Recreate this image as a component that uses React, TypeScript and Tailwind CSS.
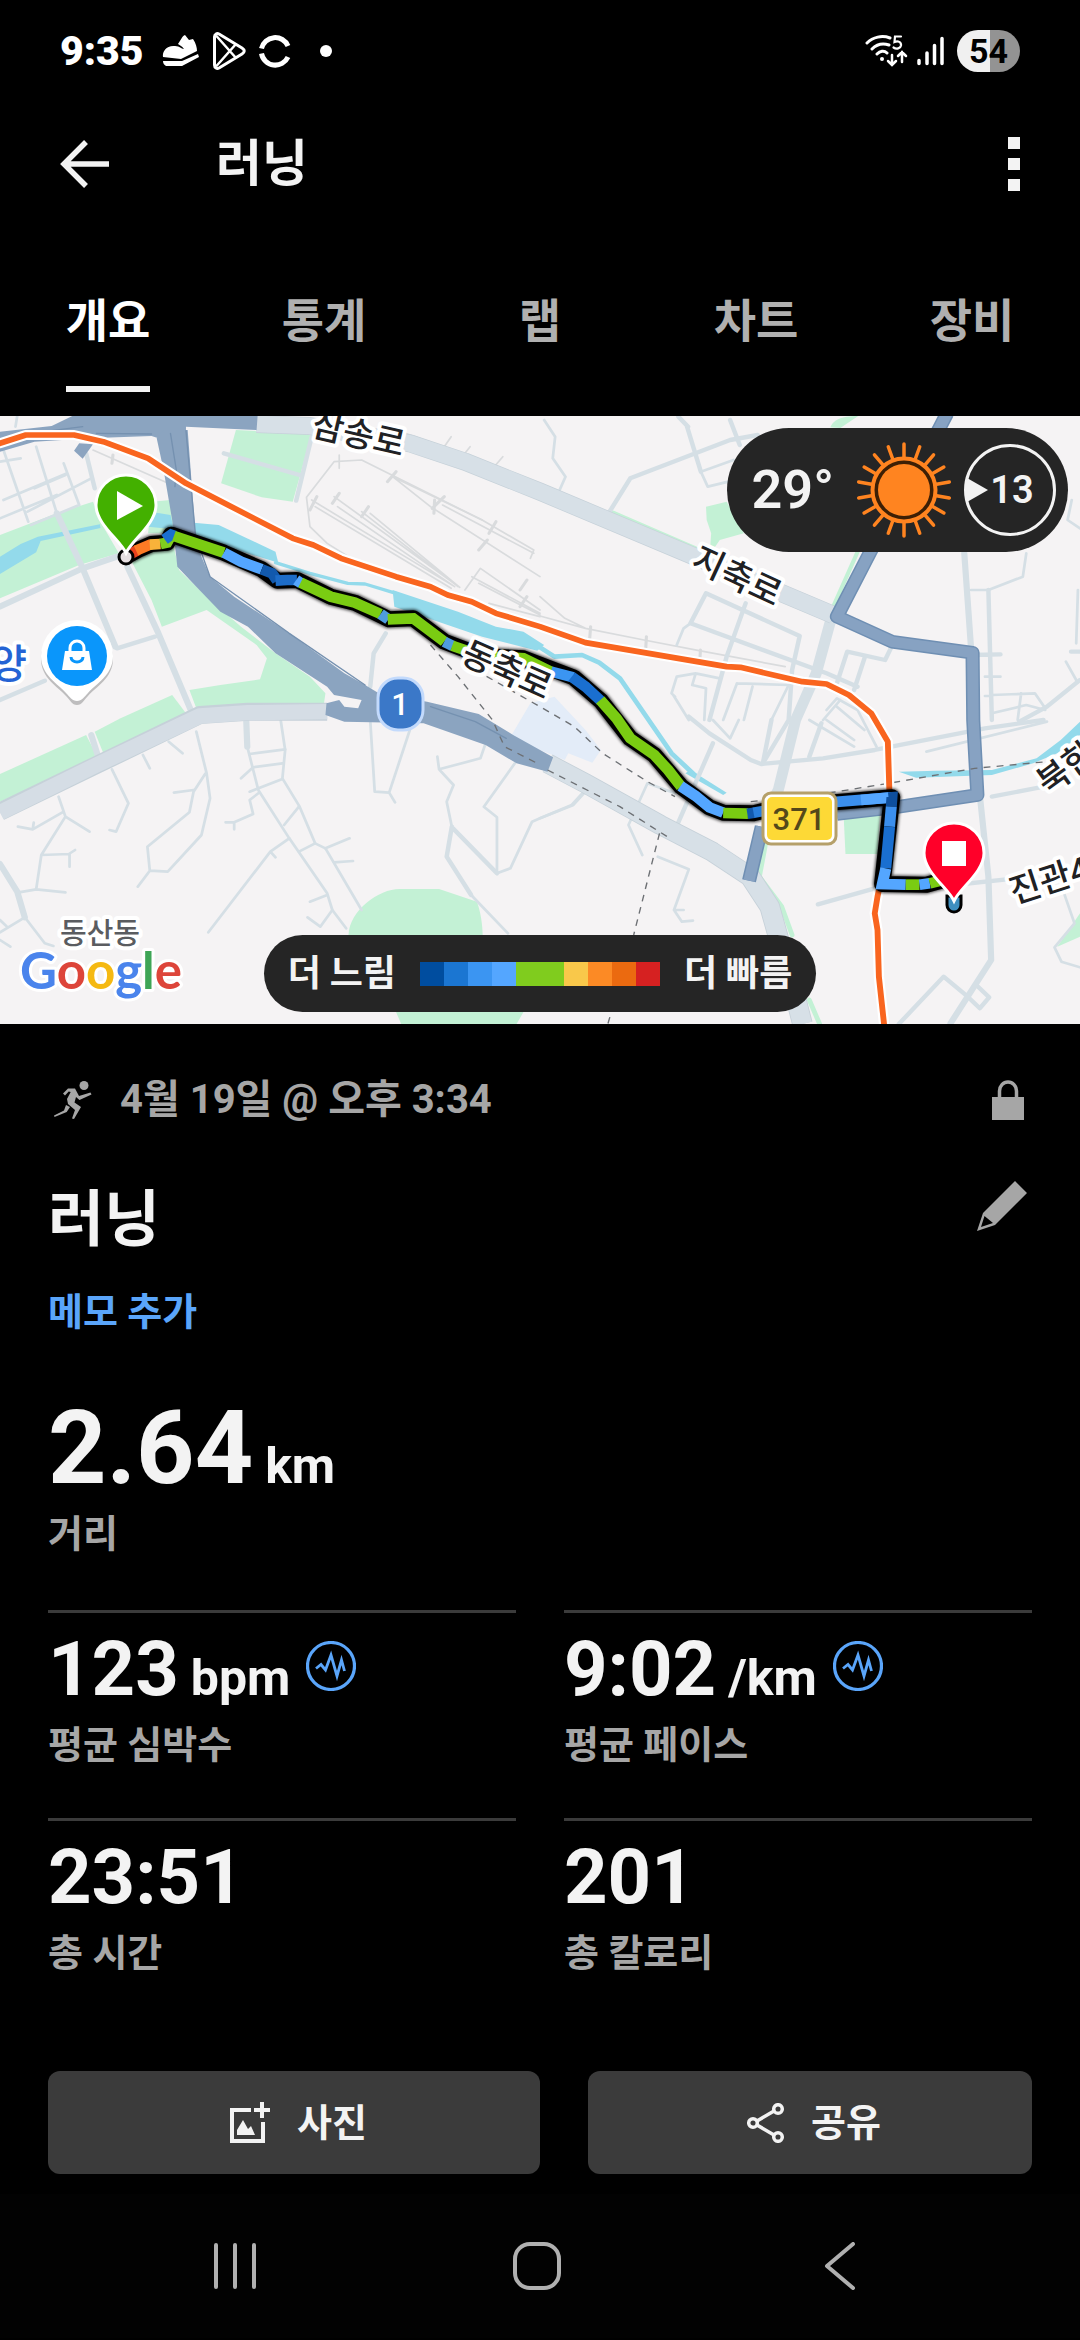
import React, { useState } from 'react';

const TABS = ['개요', '통계', '랩', '차트', '장비'];

const PACE_COLORS = [
  'bg-[#004d9f]',
  'bg-[#1b76d2]',
  'bg-[#3b95f2]',
  'bg-[#54a6ff]',
  'bg-[#80cc1e]',
  'bg-[#80cc1e]',
  'bg-[#f9c84a]',
  'bg-[#fc8a25]',
  'bg-[#eb6a10]',
  'bg-[#d62121]',
];

interface Stat {
  value: string;
  unit?: string;
  label: string;
  hasChart?: boolean;
}

const STATS: Stat[] = [
  { value: '123', unit: 'bpm', label: '평균 심박수', hasChart: true },
  { value: '9:02', unit: '/km', label: '평균 페이스', hasChart: true },
  { value: '23:51', label: '총 시간' },
  { value: '201', label: '총 칼로리' },
];

const RAY_ANGLES = Array.from({ length: 18 }, (_, i) => i * 20);

// [color, path] for each stretch of the run
const TRACK: [string, string][] = [
  ['#e8401c', 'M372 436 L400 420'],
  ['#fc7a25', 'M395 422 L440 402'],
  ['#f9b23a', 'M435 404 L466 402'],
  ['#80cc1e', 'M466 402 L485 398 L492 385'],
  ['#1a6fd0', 'M478 388 L497 374 L508 378'],
  ['#7acc12', 'M505 378 L650 428'],
  ['#54a6ff', 'M650 428 L700 455 L760 478'],
  ['#1259ad', 'M760 478 L790 490 L805 512'],
  ['#1d6cc8', 'M800 512 L835 510 L862 510'],
  ['#54a6ff', 'M860 510 L875 520'],
  ['#7acc12', 'M873 518 L960 560 L1030 578 L1105 612'],
  ['#4f9de0', 'M1105 612 L1128 628'],
  ['#7acc12', 'M1126 628 L1200 625 L1290 695'],
  ['#4f9de0', 'M1290 695 L1315 708'],
  ['#7acc12', 'M1313 707 L1400 738 L1520 745 L1600 785'],
  ['#3b95f2', 'M1600 785 L1665 802'],
  ['#1a6fd0', 'M1660 800 L1700 830 L1745 873'],
  ['#7acc12', 'M1743 870 L1790 925 L1830 985 L1900 1035 L1940 1080 L1978 1130'],
  ['#54a6ff', 'M1976 1128 L2020 1158 L2060 1192 L2100 1208'],
  ['#7acc12', 'M2100 1209 L2172 1211'],
  ['#1259ad', 'M2170 1211 L2190 1208'],
  ['#2a7fdc', 'M2188 1208 L2260 1195'],
  ['#3b8fee', 'M2260 1190 L2590 1162'],
  ['#54a6ff', 'M2500 1170 L2590 1162'],
  ['#0e4f9e', 'M2580 1163 L2590 1162 L2588 1190'],
  ['#3b8fee', 'M2588 1190 L2583 1250'],
  ['#1a6fd0', 'M2583 1250 L2572 1375'],
  ['#54a6ff', 'M2572 1375 L2562 1422 L2630 1424'],
  ['#7acc12', 'M2630 1424 L2670 1424'],
  ['#54a6ff', 'M2670 1424 L2700 1420'],
  ['#7acc12', 'M2700 1420 L2770 1402'],
];

const StatusBar: React.FC = () => (
  <div className="flex h-[102px] items-center justify-between px-[60px] text-white">
    <div className="flex items-center">
      <span className="text-[41px] leading-[48px] font-black">9:35</span>
      <svg className="ml-[18px] h-8 w-[38px]" viewBox="0 0 38 32" fill="currentColor">
        <path d="M1 22 C0 16 5 10 13 11 C18 11 19 14 22 14 C20 11 17 10 16 9 C19 5 20 1 23 0 L27 5 L31 4 C34 8 35 13 35 16 L19 24 Z" />
        <path d="M1 26 L20 26 L36 19 L37 22 L20 31 L4 31 C2 30 1 28 1 26 Z" />
      </svg>
      <svg className="ml-3 h-[38px] w-[34px]" viewBox="0 0 34 38" fill="none" stroke="currentColor" strokeWidth="3" strokeLinejoin="round">
        <path d="M2.500 5 C2.500 2 5 1 7 2 L30 16 C33 18 33 20 30 22 L7 36 C5 37 2.500 36 2.500 33 Z" />
        <path d="M4 3.500 L24 26 M4 34.500 L24 12" strokeWidth="2.500" />
      </svg>
      <svg className="ml-3 h-[34px] w-[34px]" viewBox="0 0 34 34" fill="none" stroke="currentColor" strokeWidth="5">
        <path d="M3.500 14.500 A14 14 0 0 1 30 12" />
        <path d="M3.500 19.500 A14 14 0 0 0 30 23" />
      </svg>
      <span className="ml-7 h-3 w-3 rounded-full bg-white" />
    </div>
    <div className="flex items-center">
      <svg className="h-8 w-[44px]" viewBox="0 0 44 32" fill="none" stroke="currentColor" strokeLinecap="round">
        <path d="M2 8 C8 2 17 0 25 3 M7 14 C12 9 18 8 24 10 M12 19 C15 16 19 15 22 18" strokeWidth="3" />
        <circle cx="17" cy="24" r="2" fill="currentColor" stroke="none" />
        <path d="M36 1.500 H30 L29.500 7 C33 5.500 36.500 7 36 10.500 C35.500 13.500 31.500 14.500 28.500 12.500" strokeWidth="2.200" />
        <path d="M27 20 V29 M23 26 L27 30 L31 26 M37 27 V17 M33 21 L37 17 L41 21" strokeWidth="2.500" />
      </svg>
      <svg className="ml-2 h-[30px] w-7" viewBox="0 0 28 30" stroke="currentColor" strokeWidth="3.500" strokeLinecap="round">
        <path d="M2 24.500 V27.500 M10 17 V27.500 M17.500 9.500 V27.500 M25 2.500 V27.500" />
      </svg>
      <div className="ml-3 flex h-[42px] w-[63px] items-center justify-center rounded-full bg-linear-to-r from-[#f0f0f0] from-53% to-[#939393] to-53% text-[34px] leading-[42px] font-bold text-black">
        54
      </div>
    </div>
  </div>
);

const RouteMap: React.FC = () => (
  <svg className="block h-auto w-full bg-[#f5f3f4]" viewBox="0 0 1080 608">
    <defs>
      <filter id="soft" x="-10%" y="-10%" width="120%" height="120%">
        <feGaussianBlur stdDeviation="4" />
      </filter>
    </defs>
    <g transform="translate(0 -6) scale(0.34439 0.33333)" fill="none" strokeLinejoin="round" strokeLinecap="round">
      {/* parks */}
      <g fill="#c3f1d5">
        <path d="M685 60 L905 72 L850 275 L760 262 L642 220 Z" />
        <path d="M0 375 L165 310 L270 275 L300 350 L345 430 L230 465 L0 565 Z" />
        <path d="M440 275 L495 270 L510 370 L430 370 Z" />
        <path d="M380 450 L500 390 L520 480 L600 560 L700 650 L800 730 L900 800 L945 850 L940 885 L760 885 L570 895 L550 840 L640 825 L755 808 L775 745 L745 705 L600 600 L470 650 L440 570 Z" />
        <path d="M0 1092 L250 975 L285 1045 L0 1175 Z" />
        <path d="M275 965 L350 925 L500 855 L540 910 L500 935 L300 1030 Z" />
        <path d="M1012 1575 C1015 1500 1100 1437 1160 1437 L1275 1437 L1385 1475 C1400 1520 1402 1560 1402 1600 L1520 1806 L1500 1842 L1165 1842 L1150 1806 Z" />
        <path d="M2050 290 L2110 275 L2160 370 L2090 390 L2070 420 L2062 415 L2065 370 L2052 330 Z" />
        <path d="M2411 52 C2420 30 2440 18 2492 18 L2440 54 Z" />
        <path d="M2450 1225 L2555 1215 L2548 1332 L2455 1332 Z" />
        <path d="M3136 1510 L3070 1610 L3136 1580 Z" />
      </g>
      <path d="M2225 1290 L2205 1400 L2270 1490 L2300 1575 M2350 1770 L2380 1842" stroke="#c3f1d5" strokeWidth="14" />
      <path d="M1780 308 L2020 415 M2270 535 L2410 592 M2490 426 L2415 600" stroke="#c3f1d5" strokeWidth="12" />
      <path d="M1480 985 L1540 880 L1610 860 L1700 960 L1745 1020 L1720 1058 L1650 1030 L1640 1050 L1568 1020 Z" fill="#e3ecf8" />

      {/* water */}
      <g fill="#93daeb">
        <path d="M0 440 L60 402 L110 380 L290 343 L292 354 L118 393 L105 427 L0 492 Z" />
        <path d="M455 308 L495 315 L505 358 L430 350 Z" />
        <path d="M563 338 L635 345 L800 425 L808 458 L660 412 L563 372 Z" />
        <path d="M1140 540 L1330 605 L1440 650 L1520 665 L1580 705 L1560 722 L1400 680 L1230 620 L1145 590 Z" />
        <path d="M2610 1085 L2720 1082 L2880 1080 L3010 1045 L3080 990 L3136 935 L3136 975 L3070 1030 L3000 1060 L2880 1095 L2660 1103 Z" />
        <path d="M2005 1080 L2110 1148 L2100 1155 L1990 1090 Z" />
      </g>
      <path d="M800 458 L900 490 L1010 520 L1060 522 L1150 550" stroke="#93daeb" strokeWidth="10" />
      <path d="M1568 712 L1610 740 L1690 735 L1740 758 L1800 805 L1840 865 L1890 940 L1950 1030 L2020 1098" stroke="#93daeb" strokeWidth="14" />

      {/* railway yard */}
      <g stroke="#d9dbdd" strokeWidth="5">
        <path d="M270 120 L500 225 M1020 445 L950 400 L900 350 L890 262 L970 155 L1050 150 L1400 330 L1550 420 L1540 445" />
        <path d="M905 270 L1320 530 M915 290 L1310 535 M970 260 L1325 525 M980 290 L1320 530 M1050 305 L1330 530 M1075 310 L1335 532" />
        <path d="M1140 200 L1250 290 L1568 500 M1140 200 L1400 330 M1285 285 L1550 430" />
        <path d="M1350 540 L1395 475 L1568 600 M1370 500 L1568 610 M1390 520 L1568 615 M1420 580 L1568 620" />
        <path d="M1568 560 L1640 625 L1700 655 L1870 690 L2030 722 L2280 770 M1568 618 L1700 655" />
        <path d="M1165 65 L1300 115 M985 135 V175 M1290 110 L1310 80 M1350 130 L1365 110 M1435 170 L1460 140" />
      </g>
      <path d="M1125 215 L1150 185 M1255 295 L1290 260 M1260 310 L1262 270 M1420 370 L1440 335 M1390 420 L1415 390 M1510 540 L1530 510 M1510 590 L1530 560 M900 300 L920 260 M965 280 L985 250 M1050 320 L1070 290 M325 160 L328 135 M1712 690 L1715 650 M1875 715 L1877 680 M2032 750 L2034 720" stroke="#d9dbdd" strokeWidth="9" />

      {/* local streets */}
      <g stroke="#d5dfe5">
        <g strokeWidth="8">
          <path d="M10 120 L82 335 M105 110 L165 310 M185 160 L230 285 L90 345 M0 325 L165 255 M10 270 L195 190 M0 155 L60 145 M80 305 L265 205 M100 235 L190 195 M50 18 L45 50" />
          <path d="M570 965 L600 1090 L610 1165 L585 1275 L487 1385 L435 1382 L428 1310 L550 1207 L562 1145 L597 1090 M435 1382 L400 1430 M562 1140 L505 1148" />
          <path d="M325 1078 L373 1180 L337 1265 L318 1260 M170 1160 L190 1220 L120 1335 L105 1438 M190 1220 L260 1265 M185 1205 L95 1258 L52 1250 M95 1258 L98 1238 M120 1335 L200 1332 L218 1320 M202 1332 V1370 M55 1447 L105 1438 L190 1447" />
          <path d="M72 1522 L130 1600 L155 1608 M72 1522 L0 1567 M0 1590 L30 1610 M0 1530 L20 1550 M415 1035 L435 1075 M490 995 L530 1030" />
          <path d="M718 1010 L750 1140 L840 1285 L950 1450 L965 1500 L1005 1555 M815 930 L828 1020 L820 1105 L870 1190 L915 1300 L945 1315 L1050 1500" />
          <path d="M725 1032 L828 1018 M735 1072 L820 1060 M725 1145 L820 1107 M825 1245 L868 1190 M840 1285 L785 1325 L605 1567 M785 1325 L800 1342 M868 1325 L915 1300 M945 1315 L1015 1285 M970 1357 L1025 1353" />
          <path d="M900 1475 L950 1455 M965 1500 L930 1550 L893 1522 M750 1150 L725 1170 L735 1212 L680 1237 L655 1237 M680 1237 V1258 M735 1072 L700 1105" />
          <path d="M1075 930 L1088 1145 L1130 1148 L1190 960 M1130 1148 L1147 1177 M1270 1040 L1275 1078 L1317 1125 L1297 1175 L1312 1250 M1275 1078 L1395 1045 L1410 1000" />
          <path d="M1368 1455 L1475 1570 M1495 1060 L1405 1190 L1443 1222 L1443 1390 L1482 1375 L1545 1235 L1568 1225 L1660 1185 L1700 1140" />
          <path d="M1580 30 L1612 80 L1605 145 L1642 200 L1625 240 M2820 540 L2870 540 L2970 500 L2980 430 M3136 355 L3100 330 L3112 270 M3130 540 L3125 700" />
          <path d="M2035 185 L2055 230 L2115 215 M2035 185 L2130 150 M2005 640 L1985 655 L1965 705 M1960 860 L1950 850 L1965 800 L2020 790 L2090 805 M1955 855 L2000 930 M2020 790 L2010 825 L2050 835 L2045 930 M2140 820 L2290 825 M2140 820 L2100 930 M2185 830 L2160 930 M2290 825 L2240 930" />
          <path d="M2400 900 L2430 865 L2490 900 L2545 1010 M2440 870 L2390 930 M2400 930 L2480 990 M2350 930 L2480 1010 M2430 890 L2510 960 M2070 930 L2120 985 L2145 930 M2880 910 L2980 885 L3035 900 M2860 858 H2880 M2880 855 L3005 850 L3035 895 M2965 850 L2955 930 M3095 755 L3125 810 M2860 800 H2905 M2690 1025 L3040 935" />
          <path d="M1880 1120 L1825 1245 L1865 1335 M1880 1120 L1960 1150 M1568 1225 L1665 1185 L1700 1145 M1910 1340 L2000 1378 L1957 1500 L1980 1535 L2012 1532 M1957 1500 H1985 M3136 1672 L3082 1655 L3062 1612 L3120 1540 L3088 1445" />
        </g>
        <g strokeWidth="13">
          <path d="M250 130 L275 235 M0 870 L130 812 M340 715 L450 680 M1120 670 L1085 730 L1075 830 M650 130 L870 195 M905 80 L860 272" />
          <path d="M1312 1250 L1297 1340 L1368 1455 M1315 1255 L1443 1390" />
          <path d="M1770 305 L1830 205 L2120 90 L2200 75 M1995 50 L2035 185 M2120 30 L2148 105 M1970 20 L1998 50" />
          <path d="M2050 550 L2322 678 L2300 780 L2290 930 L2215 1060 M2050 550 L2005 640 L2400 790 L2490 830 M2165 580 L2110 740 L2060 930 M2430 820 L2460 725 L2570 750 L2588 712 M2510 745 L2480 840" />
          <path d="M2870 540 L2880 930 M2815 735 L2905 733 M3110 725 H3136 M3136 810 L3040 890 L2960 935 M2070 1000 L1960 1260 M2240 930 L2215 1060 M2385 940 L2350 1040" />
          <path d="M2000 920 L2060 970 L2180 1050 L2210 1062 L2390 1045 L2540 1020 L2860 955 L3030 930 M2880 1160 L3020 1132 M2610 1842 L2740 1700 L2810 1760 L2845 1795 L2872 1762 L2840 1730 M2375 1483 L2540 1435 M2770 1425 L2950 1405" />
        </g>
        <g strokeWidth="18">
          <path d="M165 310 L240 475 L335 710 M0 590 L240 475 L340 440 M370 470 L460 670 L558 910 M0 1362 L50 1445 L72 1522 M715 930 L718 1010" />
          <path d="M2800 430 L2820 720 M2845 1155 L2870 1400 L2878 1650 L2760 1840 M265 975 L285 1040" />
        </g>
        <path d="M2415 620 L2370 790 L2310 930 L2260 1140 L2225 1210" strokeWidth="32" />
      </g>
      {/* wide avenues, a darker edge below the fill */}
      <g strokeLinecap="butt">
        <path d="M745 42 L900 48 L1190 100 L1350 155 L1568 245 L1990 428 L2420 615 M0 1205 L280 1065 L580 915 L720 905 L950 905" stroke="#c6d1d9" strokeWidth="54" />
        <path d="M745 42 L900 48 L1190 100 L1350 155 L1568 245 L1990 428 L2420 615" stroke="#d7e0e7" strokeWidth="50" />
        <path d="M0 1208 L280 1065 L580 918 L720 908 L950 905" stroke="#d5dde5" strokeWidth="46" />
        <path d="M1590 1060 L1700 1120 L1918 1245 L2068 1325 L2178 1400 L2235 1490 L2265 1600 L2300 1720 L2330 1842" stroke="#c6d1d9" strokeWidth="60" />
        <path d="M1590 1060 L1700 1120 L1918 1245 L2068 1325 L2178 1400 L2235 1490 L2265 1600 L2300 1720 L2330 1842" stroke="#d7e0e7" strokeWidth="55" />
      </g>

      {/* highways */}
      <g fill="#8ba4c0">
        <path d="M0 65 L150 48 L210 18 L748 18 L745 60 L540 50 L540 75 L460 85 L440 78 L260 85 L100 95 L0 125 Z" />
        <path d="M455 85 L475 60 L545 60 L568 380 L585 440 L610 500 L680 560 L840 670 L1000 790 L1060 825 L1100 850 L1240 875 L1390 912 L1490 975 L1606 1042 L1590 1085 L1500 1060 L1410 1005 L1230 940 L1000 935 L945 915 L948 880 L985 870 L1000 890 L1040 895 L1050 870 L970 855 L950 830 L800 730 L720 650 L640 605 L570 530 L515 470 L500 330 L475 180 Z" />
        <path d="M215 122 L230 100 L270 103 L240 146 Z" />
      </g>
      <g stroke="#7591b0" strokeWidth="4">
        <path d="M495 70 L512 180 L508 230 M0 90 L150 62 L240 50 M280 70 L440 72 M1250 890 L1380 935 L1470 985" />
        <path d="M540 62 L568 380 L610 500 L840 670 L1060 825" />
      </g>
      <g strokeLinecap="butt">
        <path d="M2750 10 L2725 60 L2530 420 L2430 620 L2590 695 L2824 728 L2826 930 L2838 1155 L2600 1192 L2430 1212 M2212 1250 L2175 1412" stroke="#6f8fb3" strokeWidth="41" />
        <path d="M2750 10 L2725 60 L2530 420 L2430 620 L2590 695 L2824 728 L2826 930 L2838 1155 L2600 1192 L2430 1212 M2212 1250 L2175 1412" stroke="#87a2c2" strokeWidth="32" />
      </g>

      {/* district border */}
      <path d="M1250 705 L1330 800 L1430 930 L1465 1010 L1560 1060 M1380 780 L1568 890 L1668 950 L1750 1030 L1880 1115 L1960 1160 M1590 1080 L1800 1190 L1945 1285 M1915 1270 L1840 1575 L1765 1842 M2180 1175 L2430 1145 L2580 1120 L2830 1075 L3040 1055" stroke="#6d7074" strokeWidth="4" strokeDasharray="20 18" strokeLinecap="butt" />

      {/* subway line */}
      <path d="M0 100 L75 75 L215 75 L300 95 L430 145 L540 220 L850 385 L910 405 L990 445 L1150 500 L1250 530 L1300 555 L1370 575 L1440 610 L1568 650 L1700 698 L2110 770 L2150 772 L2330 815 L2400 822 L2465 855 L2530 910 L2578 995 L2583 1160 L2560 1400 L2548 1460 L2540 1510 L2548 1560 L2552 1700 L2567 1842" stroke="#ffffff" strokeWidth="30" />
      <path d="M0 100 L75 75 L215 75 L300 95 L430 145 L540 220 L850 385 L910 405 L990 445 L1150 500 L1250 530 L1300 555 L1370 575 L1440 610 L1568 650 L1700 698 L2110 770 L2150 772 L2330 815 L2400 822 L2465 855 L2530 910 L2578 995 L2583 1160 L2560 1400 L2548 1460 L2540 1510 L2548 1560 L2552 1700 L2567 1842" stroke="#f9651f" strokeWidth="17" />

      {/* run */}
      <g stroke="#000000" strokeLinecap="butt">
        <path d="M372 436 L400 420 L440 402 L485 398 L497 374 L650 428 L760 478 L805 512 L862 510 L960 560 L1030 578 L1130 628 L1200 625 L1290 695 L1400 738 L1520 745 L1665 802 L1745 873 L1830 985 L1900 1035 L1978 1130 L2060 1192 L2100 1208 L2188 1210 L2260 1192 L2590 1162 L2562 1422 L2690 1424 L2770 1402" strokeWidth="54" filter="url(#soft)" opacity="0.7" />
        <path d="M372 436 L400 420 L440 402 L485 398 L497 374 L650 428 L760 478 L805 512 L862 510 L960 560 L1030 578 L1130 628 L1200 625 L1290 695 L1400 738 L1520 745 L1665 802 L1745 873 L1830 985 L1900 1035 L1978 1130 L2060 1192 L2100 1208 L2188 1210 L2260 1192 L2590 1162 L2562 1422 L2690 1424 L2770 1402" strokeWidth="48" />
      </g>
      <g strokeWidth="32" strokeLinecap="butt" strokeLinejoin="miter">
        {TRACK.map(([color, d]) => (
          <path key={d} d={d} stroke={color} />
        ))}
      </g>
    </g>

    {/* street names */}
    <g className="font-['Roboto','Noto_Sans_CJK_KR',sans-serif]" fill="#202124" stroke="#ffffff" strokeWidth="8" strokeLinejoin="round" paintOrder="stroke" fontSize="34" fontWeight="500" textAnchor="middle">
      <text transform="translate(356 30) rotate(13)">삼송로</text>
      <text transform="translate(502 265) rotate(24)">동축로</text>
      <text transform="translate(732 171) rotate(25)">지축로</text>
      <text transform="translate(1014 488) rotate(-18)" textAnchor="start">진관4로</text>
      <text transform="translate(1048 380) rotate(-36)" textAnchor="start">북한산로</text>
      <text x="100" y="528" fontSize="29" fill="#5a5c60">동산동</text>
      <text x="27" y="262" fontSize="40" fill="#2463d4" textAnchor="end">고양</text>
    </g>

    {/* route badges */}
    <rect x="378" y="262" width="45" height="52" rx="20" fill="#3b78c8" stroke="#c3dafc" strokeWidth="3" />
    <text x="400" y="299" className="font-['Roboto',sans-serif]" fontSize="31" fontWeight="500" fill="#ffffff" textAnchor="middle">1</text>
    <rect x="763" y="377" width="73" height="51" rx="8" fill="#ffffff" stroke="#b5a06a" strokeWidth="3" />
    <rect x="767" y="381" width="65" height="43" rx="5" fill="#fdd936" />
    <text x="799" y="414" className="font-['Roboto',sans-serif]" fontSize="31" fontWeight="500" fill="#54481a" textAnchor="middle">371</text>

    {/* department store */}
    <path d="M77 286 C72 286 70 281 66 277 C58 268 41 259 41 240 A36 36 0 0 1 113 240 C113 259 96 268 88 277 C84 281 82 286 77 286 Z" fill="#9a9a9a" opacity="0.6" transform="translate(0 3)" />
    <path d="M77 285 C72 285 70 281 66 277 C58 268 41 259 41 240 A36 36 0 0 1 113 240 C113 259 96 268 88 277 C84 281 82 285 77 285 Z" fill="#ffffff" />
    <circle cx="77" cy="240" r="30" fill="#0a96fb" />
    <path d="M65 235 H89 L92 254 H62 Z" fill="#ffffff" />
    <path d="M70 236 V232 A7 7 0 0 1 84 232 V236" fill="none" stroke="#ffffff" strokeWidth="3" />
    <path d="M71 241 A6 5 0 0 0 83 241" fill="none" stroke="#0a96fb" strokeWidth="3" />

    {/* start and finish */}
    <circle cx="126" cy="141" r="7" fill="#e6dfe2" stroke="#000000" strokeWidth="3" />
    <path d="M126 137 C120 124 96 108 96 89 A30 30 0 0 1 156 89 C156 108 132 124 126 137 Z" fill="#43b000" stroke="#ffffff" strokeWidth="3" />
    <path d="M117 75 L143 90 L117 104 Z" fill="#ffffff" />
    <path d="M947 480 V489 A7 7 0 0 0 961 489 V480 Z" fill="#3f8fc0" stroke="#000000" strokeWidth="3" />
    <path d="M954 485 C948 472 924 456 924 437 A30 30 0 0 1 984 437 C984 456 960 472 954 485 Z" fill="#ff0029" stroke="#ffffff" strokeWidth="3" />
    <rect x="942" y="425" width="24" height="25" fill="#ffffff" />

    <text x="20" y="573" className="font-['Lato',sans-serif]" fontSize="51" fontWeight="700" stroke="#ffffff" strokeWidth="6" strokeLinejoin="round" paintOrder="stroke">
      <tspan fill="#4a84ec">G</tspan>
      <tspan fill="#dd453a">o</tspan>
      <tspan fill="#f5b912">o</tspan>
      <tspan fill="#4a84ec">g</tspan>
      <tspan fill="#3ea556">l</tspan>
      <tspan fill="#dd453a">e</tspan>
    </text>
  </svg>
);

const Weather: React.FC = () => (
  <div className="absolute top-3 right-3 flex h-[124px] items-center rounded-full bg-[#252525] pr-3 pl-6 text-[#f3f3f3]">
    <span className="text-[54px] leading-[64px] font-semibold">29°</span>
    <svg className="ml-[22px] h-24 w-24" viewBox="-48 -48 96 96">
      <circle r="31.500" fill="#3d1f05" stroke="#ff8420" strokeWidth="4" />
      <circle r="26" fill="#ff8420" />
      {RAY_ANGLES.map((angle) => (
        <path key={angle} d="M0 -33 V-46" stroke="#ff8420" strokeWidth="3.500" strokeLinecap="round" transform={`rotate(${angle})`} />
      ))}
    </svg>
    <div className="relative ml-3 flex h-[92px] w-[92px] items-center justify-center rounded-full border-3 border-[#f3f3f3] pl-1 text-[38px] leading-[44px] font-semibold">
      <svg className="absolute top-[31px] left-0 h-6 w-[22px]" viewBox="0 0 22 24" fill="currentColor">
        <path d="M0 0 L21 12 L0 24 Z" />
      </svg>
      13
    </div>
  </div>
);

const PaceLegend: React.FC = () => (
  <div className="absolute inset-x-0 bottom-3 flex justify-center">
    <div className="flex h-[77px] items-center gap-6 rounded-full bg-[#252525] px-6 text-[36px] leading-[48px] font-bold text-[#f3f3f3]">
      <span>더 느림</span>
      <div className="flex">
        {PACE_COLORS.map((color, i) => (
          <span key={i} className={`h-6 w-6 ${color}`} />
        ))}
      </div>
      <span>더 빠름</span>
    </div>
  </div>
);

const StatCell: React.FC<{ stat: Stat }> = ({ stat }) => (
  <div className="border-t-3 border-[#3b3b3b] pt-3 pb-[49px]">
    <div className="flex h-[88px] items-baseline text-[76px] leading-[88px] font-bold">
      <span>{stat.value}</span>
      {stat.unit && <span className="ml-3 text-[50px] leading-none">{stat.unit}</span>}
      {stat.hasChart && (
        <button type="button" aria-label={`${stat.label} 차트`} className="mt-4 ml-4 self-start text-[#5aa5fa]">
          <svg className="block h-[50px] w-[50px]" viewBox="0 0 50 50" fill="none" stroke="currentColor">
            <circle cx="25" cy="25" r="23.500" strokeWidth="3.200" />
            <path d="M10 27.500 L15 23.500 L19.500 29 L25 14 L31 35 L35.500 19 L38.500 30" strokeWidth="2.800" />
          </svg>
        </button>
      )}
    </div>
    <p className="mt-2 text-[38px] leading-[48px] font-bold text-[#a6a6a6]">{stat.label}</p>
  </div>
);

export default function App() {
  const [activeTab, setActiveTab] = useState(TABS[0]);

  return (
    <div className="min-h-screen bg-black font-['Roboto','Noto_Sans_CJK_KR',sans-serif] text-[#f3f3f3]">
      <StatusBar />

      <header className="flex h-[124px] items-center px-[60px]">
        <button type="button" aria-label="뒤로">
          <svg className="block h-12 w-[50px]" viewBox="0 0 50 48" fill="none" stroke="currentColor" strokeWidth="5.500">
            <path d="M49 24 H5 M26 2 L4 24 L26 46" />
          </svg>
        </button>
        <h1 className="ml-[106px] flex-1 text-[50px] leading-[56px] font-bold">러닝</h1>
        <button type="button" aria-label="더보기" className="flex flex-col gap-[9px]">
          <span className="h-3 w-3 bg-current" />
          <span className="h-3 w-3 bg-current" />
          <span className="h-3 w-3 bg-current" />
        </button>
      </header>

      <nav className="grid h-[190px] grid-cols-5">
        {TABS.map((tab) => (
          <button
            key={tab}
            type="button"
            onClick={() => setActiveTab(tab)}
            className={`relative text-[46px] leading-[56px] font-bold ${tab === activeTab ? 'text-white' : 'text-[#b0b0b0]'}`}
          >
            {tab}
            {tab === activeTab && <span className="absolute inset-x-[66px] bottom-6 h-[6px] bg-[#f3f3f3]" />}
          </button>
        ))}
      </nav>

      <section className="relative">
        <RouteMap />
        <Weather />
        <PaceLegend />
      </section>

      <main className="px-12 pt-11">
        <div className="flex items-center text-[#a6a6a6]">
          <svg className="ml-[6px] h-[38px] w-[38px]" viewBox="0 0 38 38" fill="currentColor">
            <circle cx="30" cy="4.500" r="4.500" />
            <path d="M9 12.500 L14 7.500 L21 7.500 L25 15 L36.500 11.500 L37.500 13.500 L25.500 19 L22 16 L20.500 21.500 L27 26 L20 38 L18 37.500 L21 29 L14 23 L13 18 L16.700 11 L14.700 10.500 L11 14.500 Z" />
            <path d="M12 24 L16 26 L12.700 31 L0.500 36 L0 34.500 L10 29.500 Z" />
          </svg>
          <time className="ml-7 flex-1 text-[40px] leading-[64px] font-bold">4월 19일 @ 오후 3:34</time>
          <svg className="mr-2 h-10 w-8" viewBox="0 0 32 40">
            <path d="M7.500 20 V11 A8.500 9 0 0 1 24.500 11 V20" fill="none" stroke="currentColor" strokeWidth="3.500" />
            <path d="M0 17 H32 V40 H0 Z" fill="currentColor" />
          </svg>
        </div>

        <div className="mt-12 flex items-start">
          <h2 className="flex-1 text-[61px] leading-[80px] font-bold">러닝</h2>
          <button type="button" aria-label="이름 편집" className="mr-1 text-[#a6a6a6]">
            <svg className="block h-[52px] w-[52px]" viewBox="0 0 52 52" fill="currentColor" fillRule="evenodd">
              <path d="M39 1 L51 13 L19 45 L1 51 L7 33 Z M8.500 36 L5 47 L17 43 Z" />
            </svg>
          </button>
        </div>

        <button type="button" className="mt-7 block text-[38px] leading-[48px] font-bold text-[#5aa5fa]">
          메모 추가
        </button>

        <p className="mt-14 text-[102px] leading-[112px] font-bold">
          2.64<span className="ml-3 text-[50px] leading-none">km</span>
        </p>
        <p className="mt-[6px] text-[38px] leading-[48px] font-bold text-[#a6a6a6]">거리</p>

        <div className="mt-13 grid grid-cols-2 gap-x-12">
          {STATS.map((stat) => (
            <StatCell key={stat.label} stat={stat} />
          ))}
        </div>

        <div className="mt-[45px] mb-5 grid grid-cols-[41fr_37fr] gap-12 text-[38px] leading-[48px] font-bold">
          <button type="button" className="flex h-[103px] items-center justify-center gap-[26px] rounded-xl bg-[#3b3b3b] pl-2">
            <svg className="h-[42px] w-[42px]" viewBox="0 0 42 42" fill="none" stroke="currentColor" strokeWidth="4">
              <path d="M22 8 H3 V39 H34 V20" />
              <path d="M33 0 V16 M25 8 H41" />
              <path d="M8 33 V28 L14 18 L19 27 L22 24 L26 33 Z" fill="currentColor" stroke="none" />
            </svg>
            사진
          </button>
          <button type="button" className="flex h-[103px] items-center justify-center gap-[26px] rounded-xl bg-[#3b3b3b] pl-2">
            <svg className="h-10 w-[38px]" viewBox="0 0 38 40" fill="none" stroke="currentColor" strokeWidth="3.500">
              <circle cx="6" cy="20" r="4.300" />
              <circle cx="31" cy="6" r="4.300" />
              <circle cx="31" cy="34" r="4.300" />
              <path d="M10 18 L27 8 M10 22 L27 32" />
            </svg>
            공유
          </button>
        </div>
      </main>

      <footer className="grid h-36 grid-cols-3 items-center bg-[#020202] pr-[89px] pl-[84px] text-[#b0b0b0]">
        <button type="button" aria-label="최근 앱" className="justify-self-center">
          <svg className="block h-12 w-11" viewBox="0 0 44 48" stroke="currentColor" strokeWidth="4" strokeLinecap="round">
            <path d="M3 3 V45 M22 3 V45 M41 3 V45" />
          </svg>
        </button>
        <button type="button" aria-label="홈" className="justify-self-center">
          <svg className="block h-12 w-12" viewBox="0 0 48 48" fill="none" stroke="currentColor" strokeWidth="4">
            <rect x="2" y="2" width="44" height="44" rx="15" />
          </svg>
        </button>
        <button type="button" aria-label="뒤로 가기" className="justify-self-center">
          <svg className="block h-12 w-8" viewBox="0 0 32 48" fill="none" stroke="currentColor" strokeWidth="4" strokeLinecap="round" strokeLinejoin="round">
            <path d="M29 2 L3 24 L29 46" />
          </svg>
        </button>
      </footer>
    </div>
  );
}
